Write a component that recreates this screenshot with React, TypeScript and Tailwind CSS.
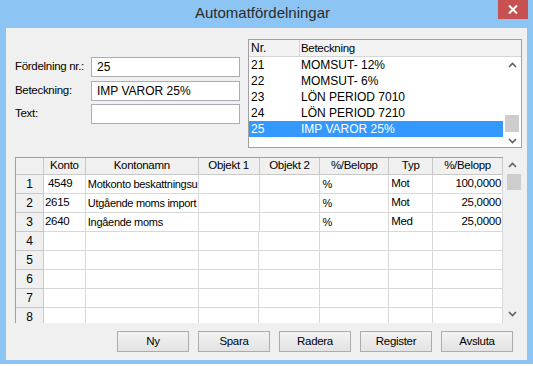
import React from "react";

const font = { fontFamily: '"Liberation Sans", Arial, sans-serif' };

const listRows = [
  { nr: "21", name: "MOMSUT- 12%" },
  { nr: "22", name: "MOMSUT- 6%" },
  { nr: "23", name: "LÖN PERIOD 7010" },
  { nr: "24", name: "LÖN PERIOD 7210" },
  { nr: "25", name: "IMP VAROR 25%", selected: true },
];

const cols = [
  { title: "Konto", w: "w-[42px]" },
  { title: "Kontonamn", w: "w-[113px]" },
  { title: "Objekt 1", w: "w-[61px]" },
  { title: "Objekt 2", w: "w-[61px]" },
  { title: "%/Belopp", w: "w-[69px]" },
  { title: "Typ", w: "w-[44px]" },
  { title: "%/Belopp", w: "w-[70px]" },
];

const gridRows = [
  { konto: "4549", pad: "pl-[4px]", namn: "Motkonto beskattningsunderlag", pb: "%", typ: "Mot", val: "100,0000" },
  { konto: "2615", pad: "pl-[1px]", namn: "Utgående moms import", pb: "%", typ: "Mot", val: "25,0000" },
  { konto: "2640", pad: "pl-[1px]", namn: "Ingående moms", pb: "%", typ: "Med", val: "25,0000" },
  null,
  null,
  null,
  null,
  null,
];

function Chevron({ up }: { up?: boolean }) {
  return (
    <svg width="9" height="6" viewBox="0 0 9 6" className="text-[#606060]">
      <path
        d={up ? "M1 5l3.5-3.5L8 5" : "M1 1l3.5 3.5L8 1"}
        fill="none"
        stroke="currentColor"
        strokeWidth={1.6}
      />
    </svg>
  );
}

function Field({ label, value }: { label: string; value: string }) {
  return (
    <div className="flex items-center h-[20px]">
      <span className="w-[76px] text-[11.5px] tracking-[-0.3px] text-black whitespace-nowrap">{label}</span>
      <div className="w-[149px] h-[20px] bg-white border border-[#abadb3] flex items-center pl-[5px] text-[12px] text-black">
        {value}
      </div>
    </div>
  );
}

export default function App() {
  return (
    <div style={font} className="w-[533px] h-[366px] bg-white">
      <div className="w-[533px] h-[364px] bg-[#8cc4f4] flex flex-col px-[6px] pb-[4px]">
        {/* title bar */}
        <div className="relative h-[28px] flex items-center justify-center shrink-0">
          <span className="text-[15px] text-[#2b2b2b] -ml-[8px] -mt-[2px]">Automatfördelningar</span>
          <div className="absolute right-[-1px] top-0 w-[30px] h-[19px] bg-[#c75050] flex items-center justify-center">
            <svg width="10" height="9" viewBox="0 0 10 9">
              <path d="M1 0.5l8 8M9 0.5l-8 8" stroke="white" strokeWidth={2} />
            </svg>
          </div>
        </div>

        <div className="flex-1 bg-[#f0f0f0] flex flex-col pl-[9px] pr-[5px] pt-[11px]">
          {/* top section */}
          <div className="flex h-[109px]">
            <div className="flex flex-col gap-[3.5px] pt-[18px] w-[233px]">
              <Field label="Fördelning nr.:" value="25" />
              <Field label="Beteckning:" value="IMP VAROR 25%" />
              <Field label="Text:" value="" />
            </div>
            <div className="w-[274px] h-[109px] bg-white border border-[#a0a0a0] flex flex-col text-[12px] text-black">
              <div className="h-[17px] flex shrink-0 bg-[#f3f3f3] border-b border-[#d5d5d5]">
                <div className="w-[51px] pl-[2px] border-r border-[#d5d5d5] leading-[16px]">Nr.</div>
                <div className="flex-1 pl-[1px] leading-[16px] text-[11.5px] tracking-[-0.3px]">Beteckning</div>
              </div>
              <div className="flex flex-1">
                <div className="flex-1 flex flex-col">
                  {listRows.map((r) => (
                    <div
                      key={r.nr}
                      className={
                        r.selected
                          ? "h-[16px] flex items-center bg-[#3399ff] text-white"
                          : "h-[16px] flex items-center"
                      }
                    >
                      <span className="w-[51px] pl-[2px]">{r.nr}</span>
                      <span className="pl-[1px]">{r.name}</span>
                    </div>
                  ))}
                </div>
                <div className="w-[18px] flex flex-col items-center pt-[5px] pb-[3px]">
                  <Chevron up />
                  <div className="flex-1" />
                  <div className="w-[14px] h-[17px] bg-[#cdcdcd] mb-[6px]" />
                  <Chevron />
                </div>
              </div>
            </div>
          </div>

          {/* grid */}
          <div className="mt-[9px] h-[166px] flex overflow-hidden text-[11px] tracking-[-0.3px] text-black">
            <div className="w-[488px] flex flex-col border-l border-t border-[#a0a0a0] overflow-hidden">
              <div className="flex h-[17px] shrink-0 bg-[#f0f0f0] text-[11.5px]">
                <div className="w-[28px] border-r border-b border-[#c8c8c8]" />
                {cols.map((c, i) => (
                  <div
                    key={i}
                    className={`${c.w} border-r border-b border-[#c8c8c8] flex items-center justify-center`}
                  >
                    {c.title}
                  </div>
                ))}
              </div>
              {gridRows.map((r, i) => (
                <div key={i} className="flex h-[19px] shrink-0">
                  <div className="w-[28px] bg-[#f0f0f0] border-r border-b border-[#c8c8c8] flex items-center justify-center text-[12px]">
                    {i + 1}
                  </div>
                  <div className={`w-[42px] bg-white border-r border-b border-[#d8d8d8] flex items-center text-[11.5px] ${r ? r.pad : ""}`}>
                    {r?.konto}
                  </div>
                  <div className="w-[113px] bg-white border-r border-b border-[#d8d8d8] flex items-center pl-[2px] overflow-hidden whitespace-nowrap">
                    {r?.namn}
                  </div>
                  <div className="w-[61px] bg-white border-r border-b border-[#d8d8d8]" />
                  <div className="w-[61px] bg-white border-r border-b border-[#d8d8d8]" />
                  <div className="w-[69px] bg-white border-r border-b border-[#d8d8d8] flex items-center pl-[2px]">
                    {r?.pb}
                  </div>
                  <div className="w-[44px] bg-white border-r border-b border-[#d8d8d8] flex items-center pl-[2px] text-[11.5px]">
                    {r?.typ}
                  </div>
                  <div className="w-[70px] bg-white border-r border-b border-[#d8d8d8] flex items-center justify-end pr-[1px] text-[11.5px]">
                    {r?.val}
                  </div>
                </div>
              ))}
            </div>
            <div className="w-[19px] flex flex-col items-center pt-[5px] pb-[6px]">
              <Chevron up />
              <div className="w-[14px] h-[16px] bg-[#cdcdcd] mt-[6px] ml-[2px]" />
              <div className="flex-1" />
              <Chevron />
            </div>
          </div>

          {/* buttons */}
          <div className="mt-[8px] flex justify-end gap-[9px] pr-[9px]">
            {["Ny", "Spara", "Radera", "Register", "Avsluta"].map((b) => (
              <button
                key={b}
                className="w-[72px] h-[21px] text-[11.5px] tracking-[-0.3px] text-black border border-[#acacac] bg-gradient-to-b from-[#f2f2f2] to-[#e3e3e3] flex items-center justify-center"
              >
                {b}
              </button>
            ))}
          </div>
        </div>
      </div>
    </div>
  );
}
